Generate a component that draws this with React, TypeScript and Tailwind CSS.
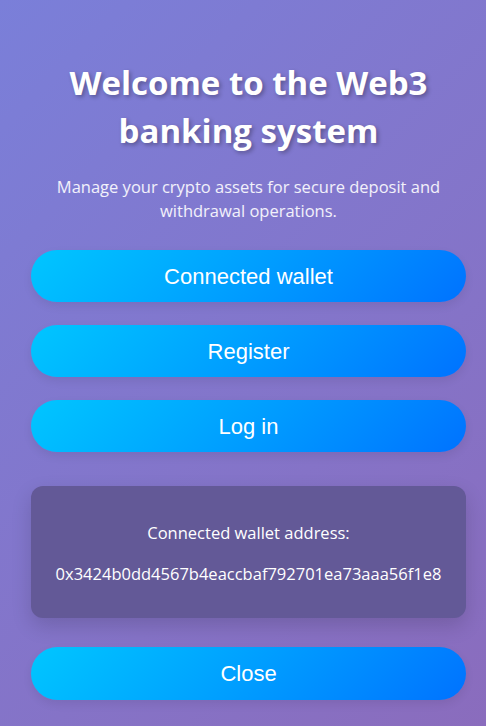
const btn =
  'h-[52px] w-full rounded-full bg-linear-135 from-[#00c6ff] to-[#0072ff] text-[22px] text-white font-["Liberation_Sans",Arial,sans-serif] shadow-[0_4px_10px_rgba(0,0,0,0.08)]';

export default function App() {
  return (
    <div className="min-h-[726px] w-full bg-linear-135 from-[#7a7fd9] to-[#8a6cbd] font-['Open_Sans','Noto_Sans',sans-serif] text-white">
      <div className="flex flex-col items-center pl-[31px] pr-[20px] pt-[59px] pb-[26px]">
        <h1 className="text-center text-[33px] font-bold leading-[48px] [text-shadow:2px_2px_4px_rgba(0,0,0,0.3)]">
          Welcome to the Web3
          <br />
          banking system
        </h1>
        <p className="mt-[20px] text-center text-[16.5px] leading-[24px] text-white/90">
          Manage your crypto assets for secure deposit and
          <br />
          withdrawal operations.
        </p>
        <div className="mt-[27px] flex w-full flex-col gap-[23px]">
          <button className={btn}>Connected wallet</button>
          <button className={btn}>Register</button>
          <button className={btn}>Log in</button>
        </div>
        <div className="mt-[34px] flex w-full flex-col items-center gap-[17px] rounded-xl bg-[#635997] pt-[35px] pb-[32px] text-[16.5px] leading-[24px] shadow-[0_8px_20px_rgba(0,0,0,0.15)]">
          <p>Connected wallet address:</p>
          <p>0x3424b0dd4567b4eaccbaf792701ea73aaa56f1e8</p>
        </div>
        <button className={btn + ' mt-[29px] h-[53px]'}>Close</button>
      </div>
    </div>
  );
}
